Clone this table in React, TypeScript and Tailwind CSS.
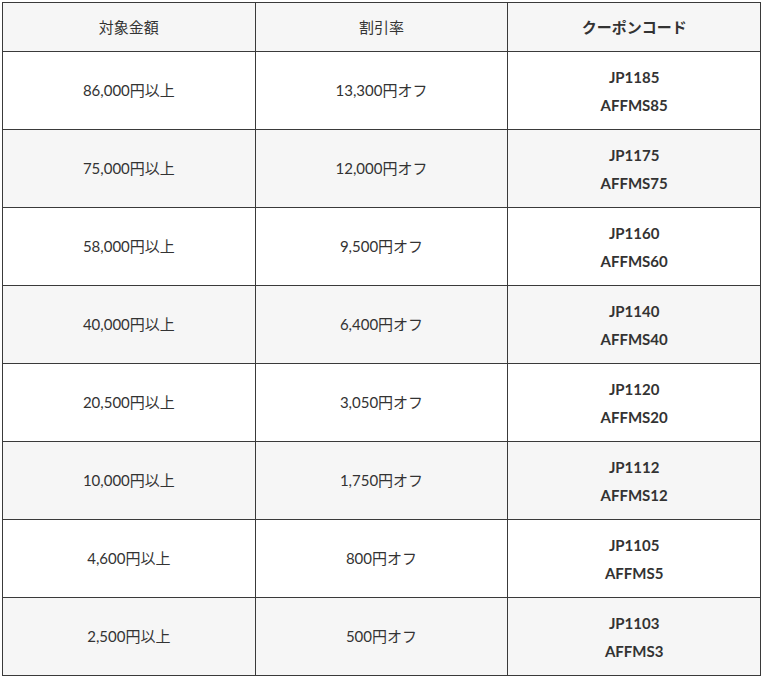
import React from "react";

const rows = [
  ["86,000円以上", "13,300円オフ", "JP1185", "AFFMS85"],
  ["75,000円以上", "12,000円オフ", "JP1175", "AFFMS75"],
  ["58,000円以上", "9,500円オフ", "JP1160", "AFFMS60"],
  ["40,000円以上", "6,400円オフ", "JP1140", "AFFMS40"],
  ["20,500円以上", "3,050円オフ", "JP1120", "AFFMS20"],
  ["10,000円以上", "1,750円オフ", "JP1112", "AFFMS12"],
  ["4,600円以上", "800円オフ", "JP1105", "AFFMS5"],
  ["2,500円以上", "500円オフ", "JP1103", "AFFMS3"],
];

export default function App() {
  return (
    <div
      className="bg-white w-[763px] h-[679px] pt-[2px] pl-[2px] text-[#333] text-[15px]"
      style={{ fontFamily: 'Lato, "Noto Sans CJK JP", sans-serif' }}
    >
      <table className="w-[759px] border-collapse table-fixed">
        <thead>
          <tr className="h-[49px] bg-[#f6f6f6]">
            <th className="border border-[#3a3a3a] font-normal text-center align-middle">対象金額</th>
            <th className="border border-[#3a3a3a] font-normal text-center align-middle">割引率</th>
            <th className="border border-[#3a3a3a] font-bold text-center align-middle">クーポンコード</th>
          </tr>
        </thead>
        <tbody>
          {rows.map((r, i) => (
            <tr key={i} className={i % 2 === 1 ? "h-[78px] bg-[#f6f6f6]" : "h-[78px] bg-white"}>
              <td className="border border-[#3a3a3a] text-center align-middle">{r[0]}</td>
              <td className="border border-[#3a3a3a] text-center align-middle">{r[1]}</td>
              <td className="border border-[#3a3a3a] text-center align-middle font-bold leading-[28px]">
                <div>{r[2]}</div>
                <div>{r[3]}</div>
              </td>
            </tr>
          ))}
        </tbody>
      </table>
    </div>
  );
}
